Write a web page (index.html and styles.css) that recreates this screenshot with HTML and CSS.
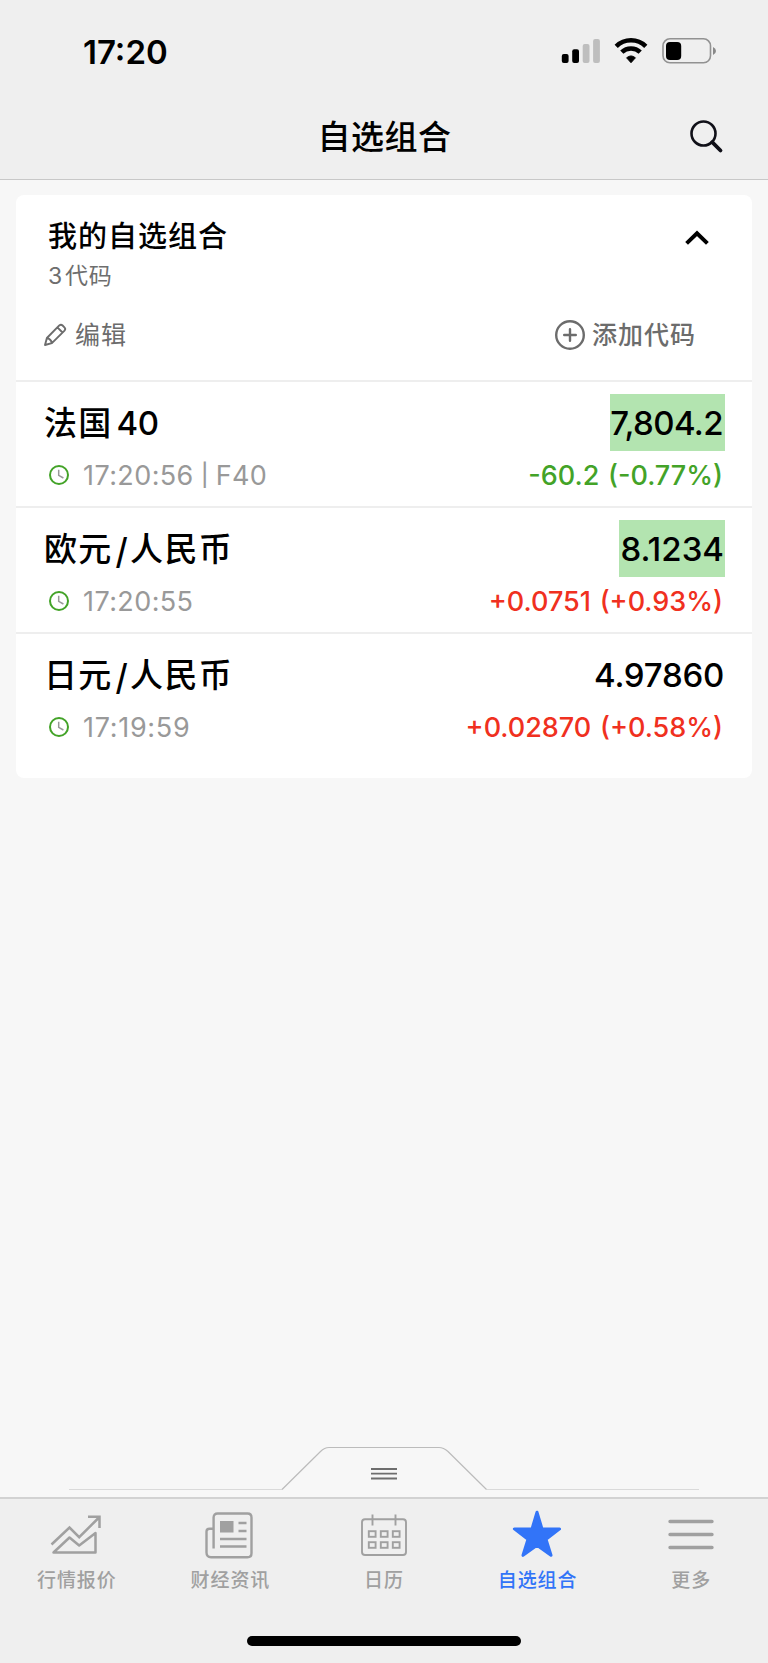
FILE: index.html
```html
<!DOCTYPE html>
<html lang="zh-CN">
<head>
<meta charset="utf-8">
<title>自选组合</title>
<link rel="stylesheet" href="styles.css">
</head>
<body>
<div class="app">
  <header class="top">
    <div class="status">
      <span class="clock">17:20</span>
      <svg class="status-icons" width="160" height="32" viewBox="0 0 160 32">
        <rect x="1.8" y="18" width="6.8" height="9" rx="2"/>
        <rect x="12.2" y="13.3" width="6.8" height="13.7" rx="2"/>
        <g fill="#bebebe"><rect x="22.7" y="8" width="6.8" height="19" rx="2"/><rect x="33.1" y="3" width="6.8" height="24" rx="2"/></g>
        <g fill="none" stroke="#000" stroke-width="4.6"><path d="M56.2 10.3a21.2 21.2 0 0 1 29.6 0"/><path d="M61.8 16.2a13.2 13.2 0 0 1 18.4 0"/></g>
        <path d="M66.6 21.8q4.4-3.7 8.8 0l-4.4 4.9z" stroke="#000" stroke-width="1" stroke-linejoin="round"/>
        <rect x="103" y="2.8" width="47.5" height="24" rx="7" fill="none" stroke="#929292" stroke-width="1.6"/>
        <rect x="106" y="6" width="15.2" height="18" rx="4"/>
        <path d="M153 11q3 1.3 3 4t-3 4z" fill="#888"/>
      </svg>
    </div>
    <div class="nav">
      <h1 class="nav-title">自选组合</h1>
      <svg class="search" width="36" height="36" viewBox="0 0 36 36" fill="none" stroke="#101018"><circle cx="15.5" cy="15.5" r="12" stroke-width="2.6"/><path d="M24.2 24.2l8.3 8.3" stroke-width="3.8" stroke-linecap="round"/></svg>
    </div>
  </header>
  <main class="content">
    <section class="card">
      <div class="card-head">
        <div class="head-row">
          <div><h2 class="card-title">我的自选组合</h2><p class="card-sub">3<span class="cjk">代码</span></p></div>
          <svg class="chevron" width="26" height="18" viewBox="0 0 26 18" fill="none" stroke="#000" stroke-width="4"><path d="M2.6 14.4L13 4.3l10.4 10.1"/></svg>
        </div>
        <div class="actions">
          <span class="edit"><svg width="24" height="24" viewBox="0 0 24 24" fill="none" stroke="#6c6c6c" stroke-width="1.9" stroke-linejoin="round"><path d="M2 22l1.9-7L16.3 2.4Q18 1 19.6 2.5l1.8 1.8q1.6 1.7.1 3.3L8.9 20.1zM3.9 15q4 .8 5 5.1M14.4 4.4l5.1 5.1"/></svg><span class="label">编辑</span></span>
          <span class="add"><svg width="32" height="32" viewBox="0 0 32 32" fill="none" stroke="#6c6c6c" stroke-width="2.4"><circle cx="16" cy="16" r="13.8"/><path d="M10.200 16h11.600M16 10.200v11.600" stroke-linecap="round"/></svg><span class="label">添加代码</span></span>
        </div>
      </div>
      <div class="quote">
        <div class="line"><span class="name">法国<span class="num">40</span></span><span class="price lit tight">7,804.2</span></div>
        <div class="line sub"><span class="time"><svg width="20" height="20" viewBox="0 0 20 20" fill="none"><circle cx="10" cy="10" r="9" stroke="#43a328" stroke-width="2"/><path d="M9.7 4.8v5.5l4.7 2.7" stroke="#999" stroke-width="1.5"/></svg><span>17:20:56 <span class="pipe">|</span> F40</span></span><span class="change down">-60.2 (-0.77%)</span></div>
      </div>
      <div class="quote">
        <div class="line"><span class="name">欧元<span class="slash">/</span>人民币</span><span class="price lit">8.1234</span></div>
        <div class="line sub"><span class="time"><svg width="20" height="20" viewBox="0 0 20 20" fill="none"><circle cx="10" cy="10" r="9" stroke="#43a328" stroke-width="2"/><path d="M9.7 4.8v5.5l4.7 2.7" stroke="#999" stroke-width="1.5"/></svg><span>17:20:55</span></span><span class="change up">+0.0751 (+0.93%)</span></div>
      </div>
      <div class="quote">
        <div class="line"><span class="name">日元<span class="slash">/</span>人民币</span><span class="price snug">4.97860</span></div>
        <div class="line sub"><span class="time wide"><svg width="20" height="20" viewBox="0 0 20 20" fill="none"><circle cx="10" cy="10" r="9" stroke="#43a328" stroke-width="2"/><path d="M9.7 4.8v5.5l4.7 2.7" stroke="#999" stroke-width="1.5"/></svg><span>17:19:59</span></span><span class="change up">+0.02870 (+0.58%)</span></div>
      </div>
    </section>
    <svg class="drawer" width="768" height="54" viewBox="0 0 768 54" fill="none">
      <path d="M69 46.5H282M486.5 46.5H699" stroke="#dadada" stroke-width="1.1"/>
      <path d="M282 46.5L320.5 8.5Q324.5 4.5 329 4.5H439Q443.5 4.5 448 8.5L486.5 46.5" stroke="#bcbcbc" stroke-width="1.2"/>
      <path d="M371 26h26M371 30.700h26M371 35.500h26" stroke="#6e6e6e" stroke-width="1.8"/>
    </svg>
  </main>
  <footer class="bottom">
    <nav class="tabs">
      <div class="tab"><svg width="54" height="54" viewBox="0 0 54 54" fill="none" stroke="#a0a0a0" stroke-width="2.500"><path d="M2.500 35.500L20.500 18.500l9.700 9.700L49.500 9M39 7.800H50.500V19"/><path d="M4.500 43.500L20.500 28.500l9.700 8L46.500 24v19.500z" stroke-linejoin="round"/></svg><span>行情报价</span></div>
      <div class="tab"><svg width="54" height="54" viewBox="0 0 54 54" fill="none" stroke="#a0a0a0" stroke-width="2.400"><path d="M11.600 39.500V8.500Q11.600 4.500 15.600 4.500H45.500Q49.500 4.500 49.500 8.500V44.200Q49.500 48.200 45.500 48.200H9Q4.500 48.200 4.500 43.500V22.500Q4.500 19.700 7.500 19.700H11"/><rect x="18" y="12" width="13.500" height="11.500" fill="#a0a0a0" stroke="none"/><path d="M36.500 14h8M36.500 22h8M18 30h26.500M18 37.500h26.500"/></svg><span>财经资讯</span></div>
      <div class="tab calendar"><svg width="54" height="54" viewBox="0 0 54 54" fill="none" stroke="#a0a0a0" stroke-width="1.900"><rect x="5" y="10.200" width="44" height="35.800" rx="3"/><path d="M15.500 5.500v11M38.500 5.500v11"/><rect x="11.800" y="22.200" width="6.800" height="5.600"/><rect x="23.800" y="22.200" width="6.800" height="5.600"/><rect x="35.800" y="22.200" width="6.800" height="5.600"/><rect x="11.800" y="33.200" width="6.800" height="5.600"/><rect x="23.800" y="33.200" width="6.800" height="5.600"/><rect x="35.800" y="33.200" width="6.800" height="5.600"/></svg><span>日历</span></div>
      <div class="tab active"><svg width="54" height="54" viewBox="0 0 54 54" fill="#3274f8" stroke="#3274f8" stroke-width="3" stroke-linejoin="round"><path d="M27 3.300L32 19.900H49.600L36 30.300L41 46.300L27 36.300L13 46.300L18 30.300L4.400 19.900H22z"/></svg><span>自选组合</span></div>
      <div class="tab more"><svg width="54" height="54" viewBox="0 0 54 54" fill="none" stroke="#a0a0a0" stroke-width="3.400" stroke-linecap="round"><path d="M6 12.500h42M6 25.500h42M6 38.500h42"/></svg><span>更多</span></div>
    </nav>
    <div class="home"></div>
  </footer>
</div>
</body>
</html>
```
FILE: styles.css
```css
* { box-sizing: border-box; margin: 0; }
body { background: #f7f7f7; color: #000; font-family: Inter, "Noto Sans CJK SC", sans-serif; }
.app { width: 768px; height: 1663px; display: flex; flex-direction: column; }
svg { display: block; flex: none; }
.top { height: 180px; background: #efefef; border-bottom: 1.5px solid #c8c8c8; }
.status { height: 100px; padding: 36px 51px 0 83px; display: flex; justify-content: space-between; }
.clock { font-size: 33px; font-weight: 600; line-height: 32px; letter-spacing: 0; }
.status-icons { margin-right: -2.5px; }
.nav { height: 72px; padding: 0 44px 0 80px; display: flex; align-items: center; }
.nav-title { flex: 1; text-align: center; font-size: 33px; line-height: 40px; font-weight: 500; letter-spacing: .5px; padding: 2px 0 0 1px; }
.content { flex: 1; padding-top: 15px; display: flex; flex-direction: column; }
.card { margin: 0 16px; height: 583px; background: #fff; border-radius: 8px; }
.card-head { height: 185px; padding: 22px 32px 0; }
.head-row { display: flex; justify-content: space-between; height: 78px; }
.card-title { font-size: 29px; line-height: 40px; font-weight: 500; letter-spacing: 1px; }
.card-sub { font-size: 23px; line-height: 38px; color: #6e6e6e; letter-spacing: .8px; }
.card-sub .cjk { margin-left: 2px; }
.chevron { margin: 12px 10px 0 0; }
.actions { display: flex; justify-content: space-between; height: 80px; align-items: center; color: #6c6c6c; font-size: 25px; letter-spacing: 1px; margin-left: -5px; }
.edit, .add { display: flex; align-items: center; }
.label { padding-bottom: 4px; }
.edit { gap: 8px; }
.add { gap: 6px; padding-right: 24px; font-weight: 500; }
.quote { height: 126px; border-top: 2px solid #eee; padding: 12px 27px 0 28px; }
.line { height: 57px; display: flex; justify-content: space-between; align-items: center; }
.line.sub { height: 48px; padding: 0 2px 0 5px; }
.name { font-size: 33px; font-weight: 500; letter-spacing: 1.3px; padding-bottom: 4px; }
.name .num { margin-left: 4px; letter-spacing: -.5px; }
.name .slash { margin: 0 1px 0 3px; display: inline-block; transform: translateY(2px) scaleY(1.08); }
.price { font-size: 33px; font-weight: 500; line-height: 57px; padding: 1px 1px 0; height: 57px; }
.tight { letter-spacing: -.6px; padding-left: 0; padding-right: 2px; }
.snug { letter-spacing: -.25px; }
.lit { background: #b3e4b0; }
.time { display: flex; align-items: center; gap: 14px; color: #999; font-size: 27px; letter-spacing: .4px; }
.time.wide { letter-spacing: .7px; }
.pipe { display: inline-block; transform: scaleY(.82); margin: 0 -1.5px 0 -1px; }
.pipe + * { margin: 0; }
.time { word-spacing: -.5px; }
.change { font-size: 27px; font-weight: 500; word-spacing: 1.5px; }
.down { color: #43a328; }
.up { color: #f03020; }
.drawer { margin-top: auto; }
.bottom { height: 166px; background: #efefef; border-top: 2px solid #d2d2d2; }
.tabs { display: flex; padding-top: 10px; height: 137px; }
.tab { width: 153.600px; display: flex; flex-direction: column; align-items: center; color: #a0a0a0; font-size: 19px; letter-spacing: .9px; font-weight: 500; }
.tab svg { margin-left: -2px; }
.tab.calendar svg, .tab.more svg { margin-left: 0; }
.tab span { line-height: 30px; margin-top: 3px; }
.tab.active { color: #3274f8; }
.home { width: 274px; height: 10px; border-radius: 5px; background: #000; margin: 0 auto; }
```
